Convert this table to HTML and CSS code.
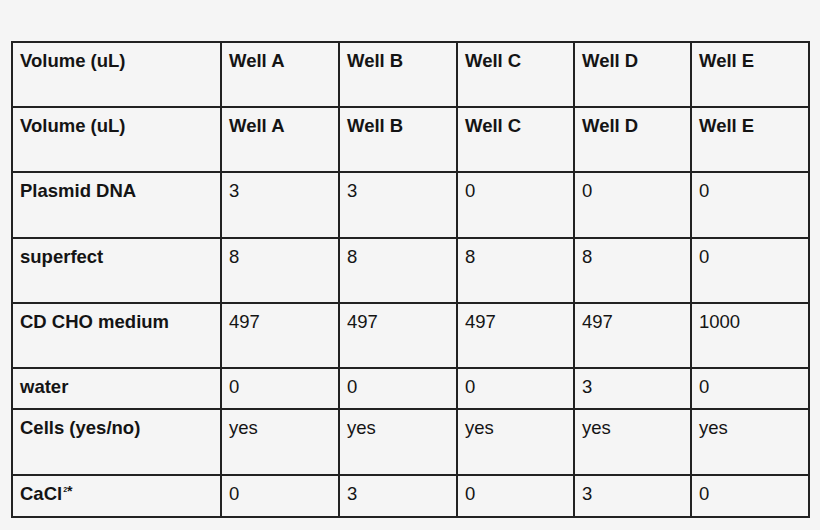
FILE: index.html
```html
<!DOCTYPE html>
<html>
<head>
<meta charset="utf-8">
<link rel="stylesheet" href="styles.css">
</head>
<body>
<div class="page">
<table class="grid">
<colgroup>
<col class="c0"><col class="c1"><col class="c2"><col class="c3"><col class="c4"><col class="c5">
</colgroup>
<tr class="h65"><th>Volume (uL)</th><th>Well A</th><th>Well B</th><th>Well C</th><th>Well D</th><th>Well E</th></tr>
<tr class="h65"><th>Volume (uL)</th><th>Well A</th><th>Well B</th><th>Well C</th><th>Well D</th><th>Well E</th></tr>
<tr class="h66"><th>Plasmid DNA</th><td>3</td><td>3</td><td>0</td><td>0</td><td>0</td></tr>
<tr class="h65"><th>superfect</th><td>8</td><td>8</td><td>8</td><td>8</td><td>0</td></tr>
<tr class="h65"><th>CD CHO medium</th><td>497</td><td>497</td><td>497</td><td>497</td><td>1000</td></tr>
<tr class="h41"><th>water</th><td>0</td><td>0</td><td>0</td><td>3</td><td>0</td></tr>
<tr class="h66"><th>Cells (yes/no)</th><td>yes</td><td>yes</td><td>yes</td><td>yes</td><td>yes</td></tr>
<tr class="h42"><th>CaCl<sup class="sub2">2</sup><span class="ast">*</span></th><td>0</td><td>3</td><td>0</td><td>3</td><td>0</td></tr>
</table>
</div>
</body>
</html>
```
FILE: styles.css
```css
html, body {
  margin: 0;
  padding: 0;
  background: #f5f5f5;
}
.page {
  padding: 41px 0 0 11px;
}
.grid {
  border-collapse: collapse;
  table-layout: fixed;
  width: 797px;
  font-family: "Liberation Sans", Arial, sans-serif;
  font-size: 18.5px;
  color: #141414;
}
.c0 { width: 209px; }
.c1 { width: 118px; }
.c2 { width: 118px; }
.c3 { width: 117px; }
.c4 { width: 117px; }
.c5 { width: 118px; }
.grid th, .grid td {
  border: 2px solid #222;
  text-align: left;
  vertical-align: top;
  padding: 8px 7px 0 7px;
  line-height: 20px;
  box-sizing: border-box;
}
.grid th { font-weight: bold; }
.grid td { font-weight: normal; }
.h65 { height: 65px; }
.h66 { height: 66px; }
.h41 { height: 41px; }
.h42 { height: 42px; }
.sub2 {
  font-size: 7px;
  vertical-align: 8px;
  line-height: 0;
  margin-left: 1px;
}
.ast {
  font-size: 14px;
  vertical-align: 4px;
  line-height: 0;
}
```
